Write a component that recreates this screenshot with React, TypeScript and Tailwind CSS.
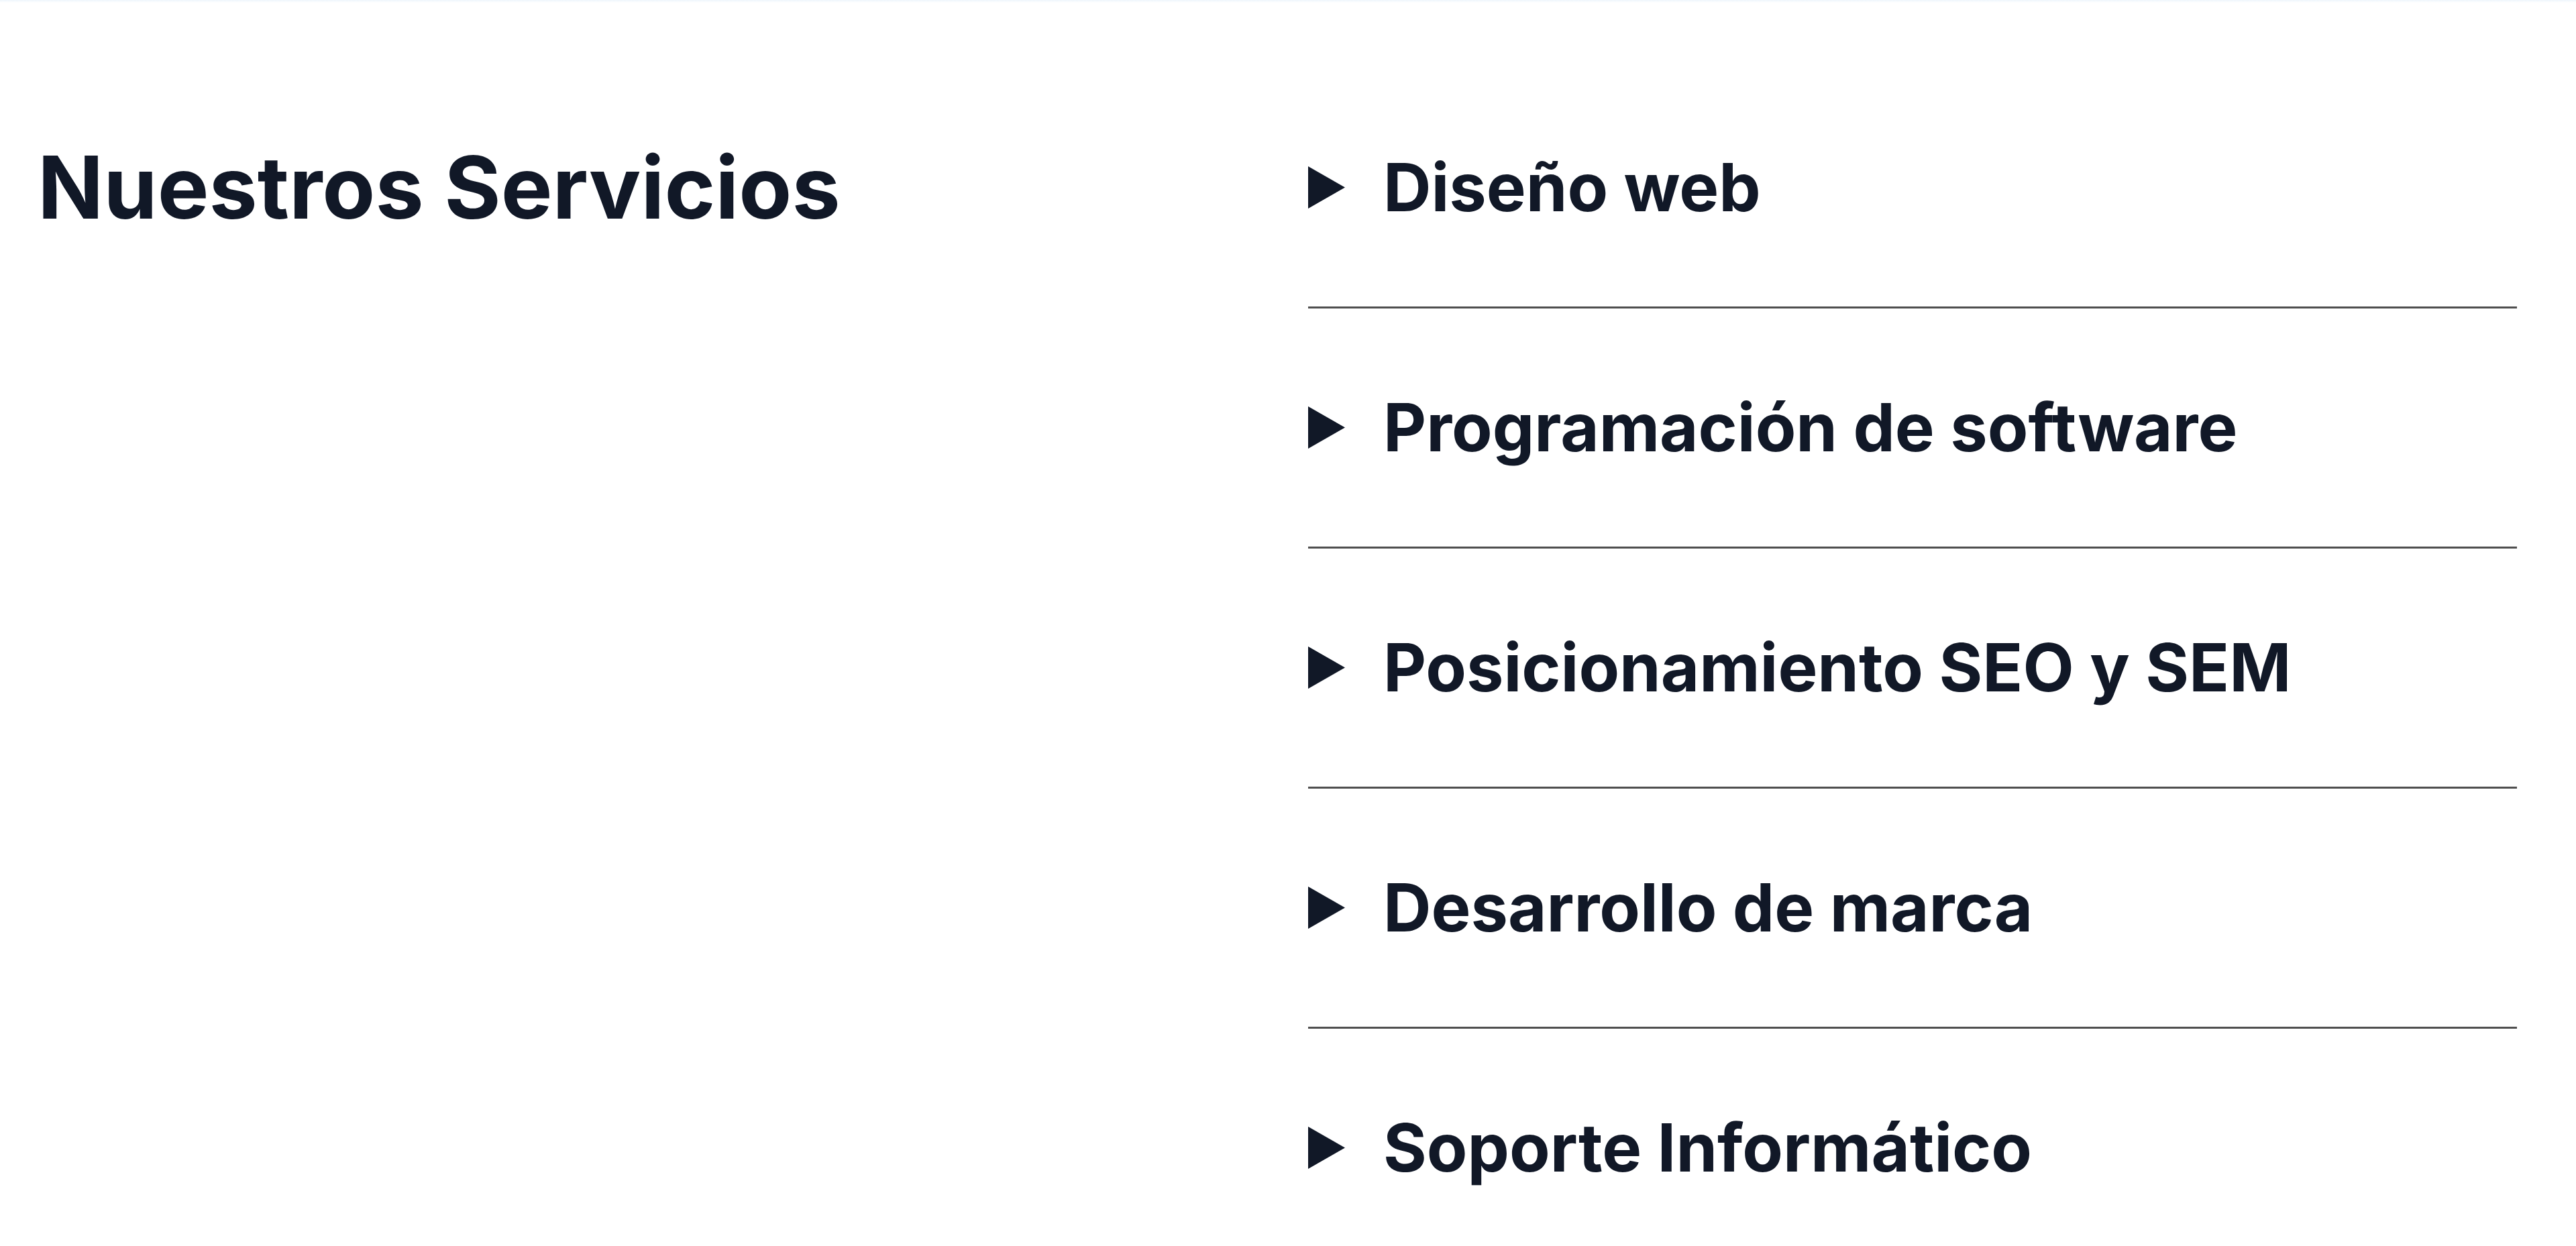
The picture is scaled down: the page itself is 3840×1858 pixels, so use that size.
const SERVICES = [
  "Diseño web",
  "Programación de software",
  "Posicionamiento SEO y SEM",
  "Desarrollo de marca",
  "Soporte Informático",
];

function Caret() {
  return (
    <svg viewBox="0 0 55 63" className="w-[55px] h-[63px] shrink-0" aria-hidden="true">
      <polygon points="0,0 55,31.5 0,63" fill="#111827" />
    </svg>
  );
}

function ServiceItem({ title }: { title: string }) {
  return (
    <details className="border-b-[3px] border-[#4f4f4f] pt-[118px] pb-[119px]">
      <summary className="flex items-center gap-[57px] list-none cursor-pointer [&::-webkit-details-marker]:hidden">
        <Caret />
        <span className="text-[99px] leading-[118px] font-bold text-[#111827]">{title}</span>
      </summary>
    </details>
  );
}

export default function App() {
  return (
    <div className="min-h-screen bg-white font-['Inter','Liberation_Sans',sans-serif]">
      <div className="h-[4px] bg-gradient-to-b from-[#eef5fc] to-white" />
      <section className="pl-[56px] pr-[88px] pt-[98px]">
        <div className="grid grid-cols-2 gap-x-[92px] items-start">
          <h2 className="pt-[118px] text-[129px] leading-[118px] font-bold text-[#111827]">
            Nuestros Servicios
          </h2>
          <div className="flex flex-col">
            {SERVICES.map((s) => (
              <ServiceItem key={s} title={s} />
            ))}
          </div>
        </div>
      </section>
    </div>
  );
}
